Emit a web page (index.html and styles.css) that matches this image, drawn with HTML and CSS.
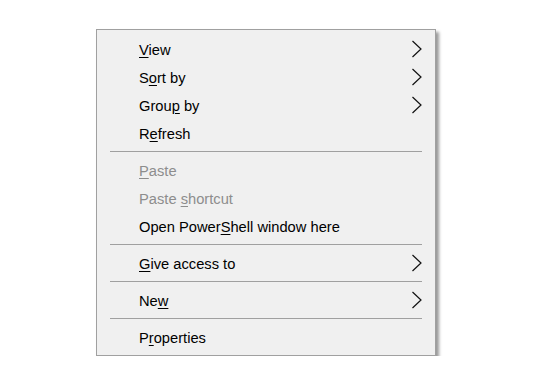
FILE: index.html
```html
<!DOCTYPE html>
<html>
<head>
    <title>Context menu</title>
    <link rel="stylesheet" href="styles.css">
</head>
<body>
    <div class="menu">
        <div class="item">
            <span class="label"><u>V</u>iew</span>
            <svg class="arrow" width="12" height="18" viewBox="0 0 12 18"><path d="M1.5 1 L10 9 L1.5 17" /></svg>
        </div>
        <div class="item">
            <span class="label">S<u>o</u>rt by</span>
            <svg class="arrow" width="12" height="18" viewBox="0 0 12 18"><path d="M1.5 1 L10 9 L1.5 17" /></svg>
        </div>
        <div class="item">
            <span class="label">Grou<u>p</u> by</span>
            <svg class="arrow" width="12" height="18" viewBox="0 0 12 18"><path d="M1.5 1 L10 9 L1.5 17" /></svg>
        </div>
        <div class="item">
            <span class="label">R<u>e</u>fresh</span>
        </div>
        <div class="sep"></div>
        <div class="item disabled">
            <span class="label"><u>P</u>aste</span>
        </div>
        <div class="item disabled">
            <span class="label">Paste <u>s</u>hortcut</span>
        </div>
        <div class="item">
            <span class="label">Open Power<u>S</u>hell window here</span>
        </div>
        <div class="sep"></div>
        <div class="item">
            <span class="label"><u>G</u>ive access to</span>
            <svg class="arrow" width="12" height="18" viewBox="0 0 12 18"><path d="M1.5 1 L10 9 L1.5 17" /></svg>
        </div>
        <div class="sep"></div>
        <div class="item">
            <span class="label">Ne<u>w</u></span>
            <svg class="arrow" width="12" height="18" viewBox="0 0 12 18"><path d="M1.5 1 L10 9 L1.5 17" /></svg>
        </div>
        <div class="sep"></div>
        <div class="item">
            <span class="label">P<u>r</u>operties</span>
        </div>
    </div>
</body>
</html>
```

FILE: styles.css
```css
body {
    margin: 0;
    background-color: #ffffff;
    font-family: "Liberation Sans", Arial, sans-serif;
}
.menu {
    width: 338px;
    margin: 29px 0 0 96px;
    padding: 5px 0 4px 0;
    background-color: #f0f0f0;
    border: 1px solid #a0a0a0;
    box-shadow: 3px 3px 3px rgba(0, 0, 0, 0.4);
}
.item {
    display: flex;
    align-items: center;
    justify-content: space-between;
    height: 28px;
    padding: 0 12px 0 42px;
    font-size: 14.7px;
    color: #000000;
}
.label {
    padding-top: 2px;
}
.item u {
    text-underline-offset: 2px;
}
.disabled {
    color: #8d8d8d;
}
.sep {
    height: 1px;
    margin: 4px 13px 4px 13px;
    background-color: #a0a0a0;
}
.arrow path {
    fill: none;
    stroke: #111111;
    stroke-width: 1.2;
}
```
